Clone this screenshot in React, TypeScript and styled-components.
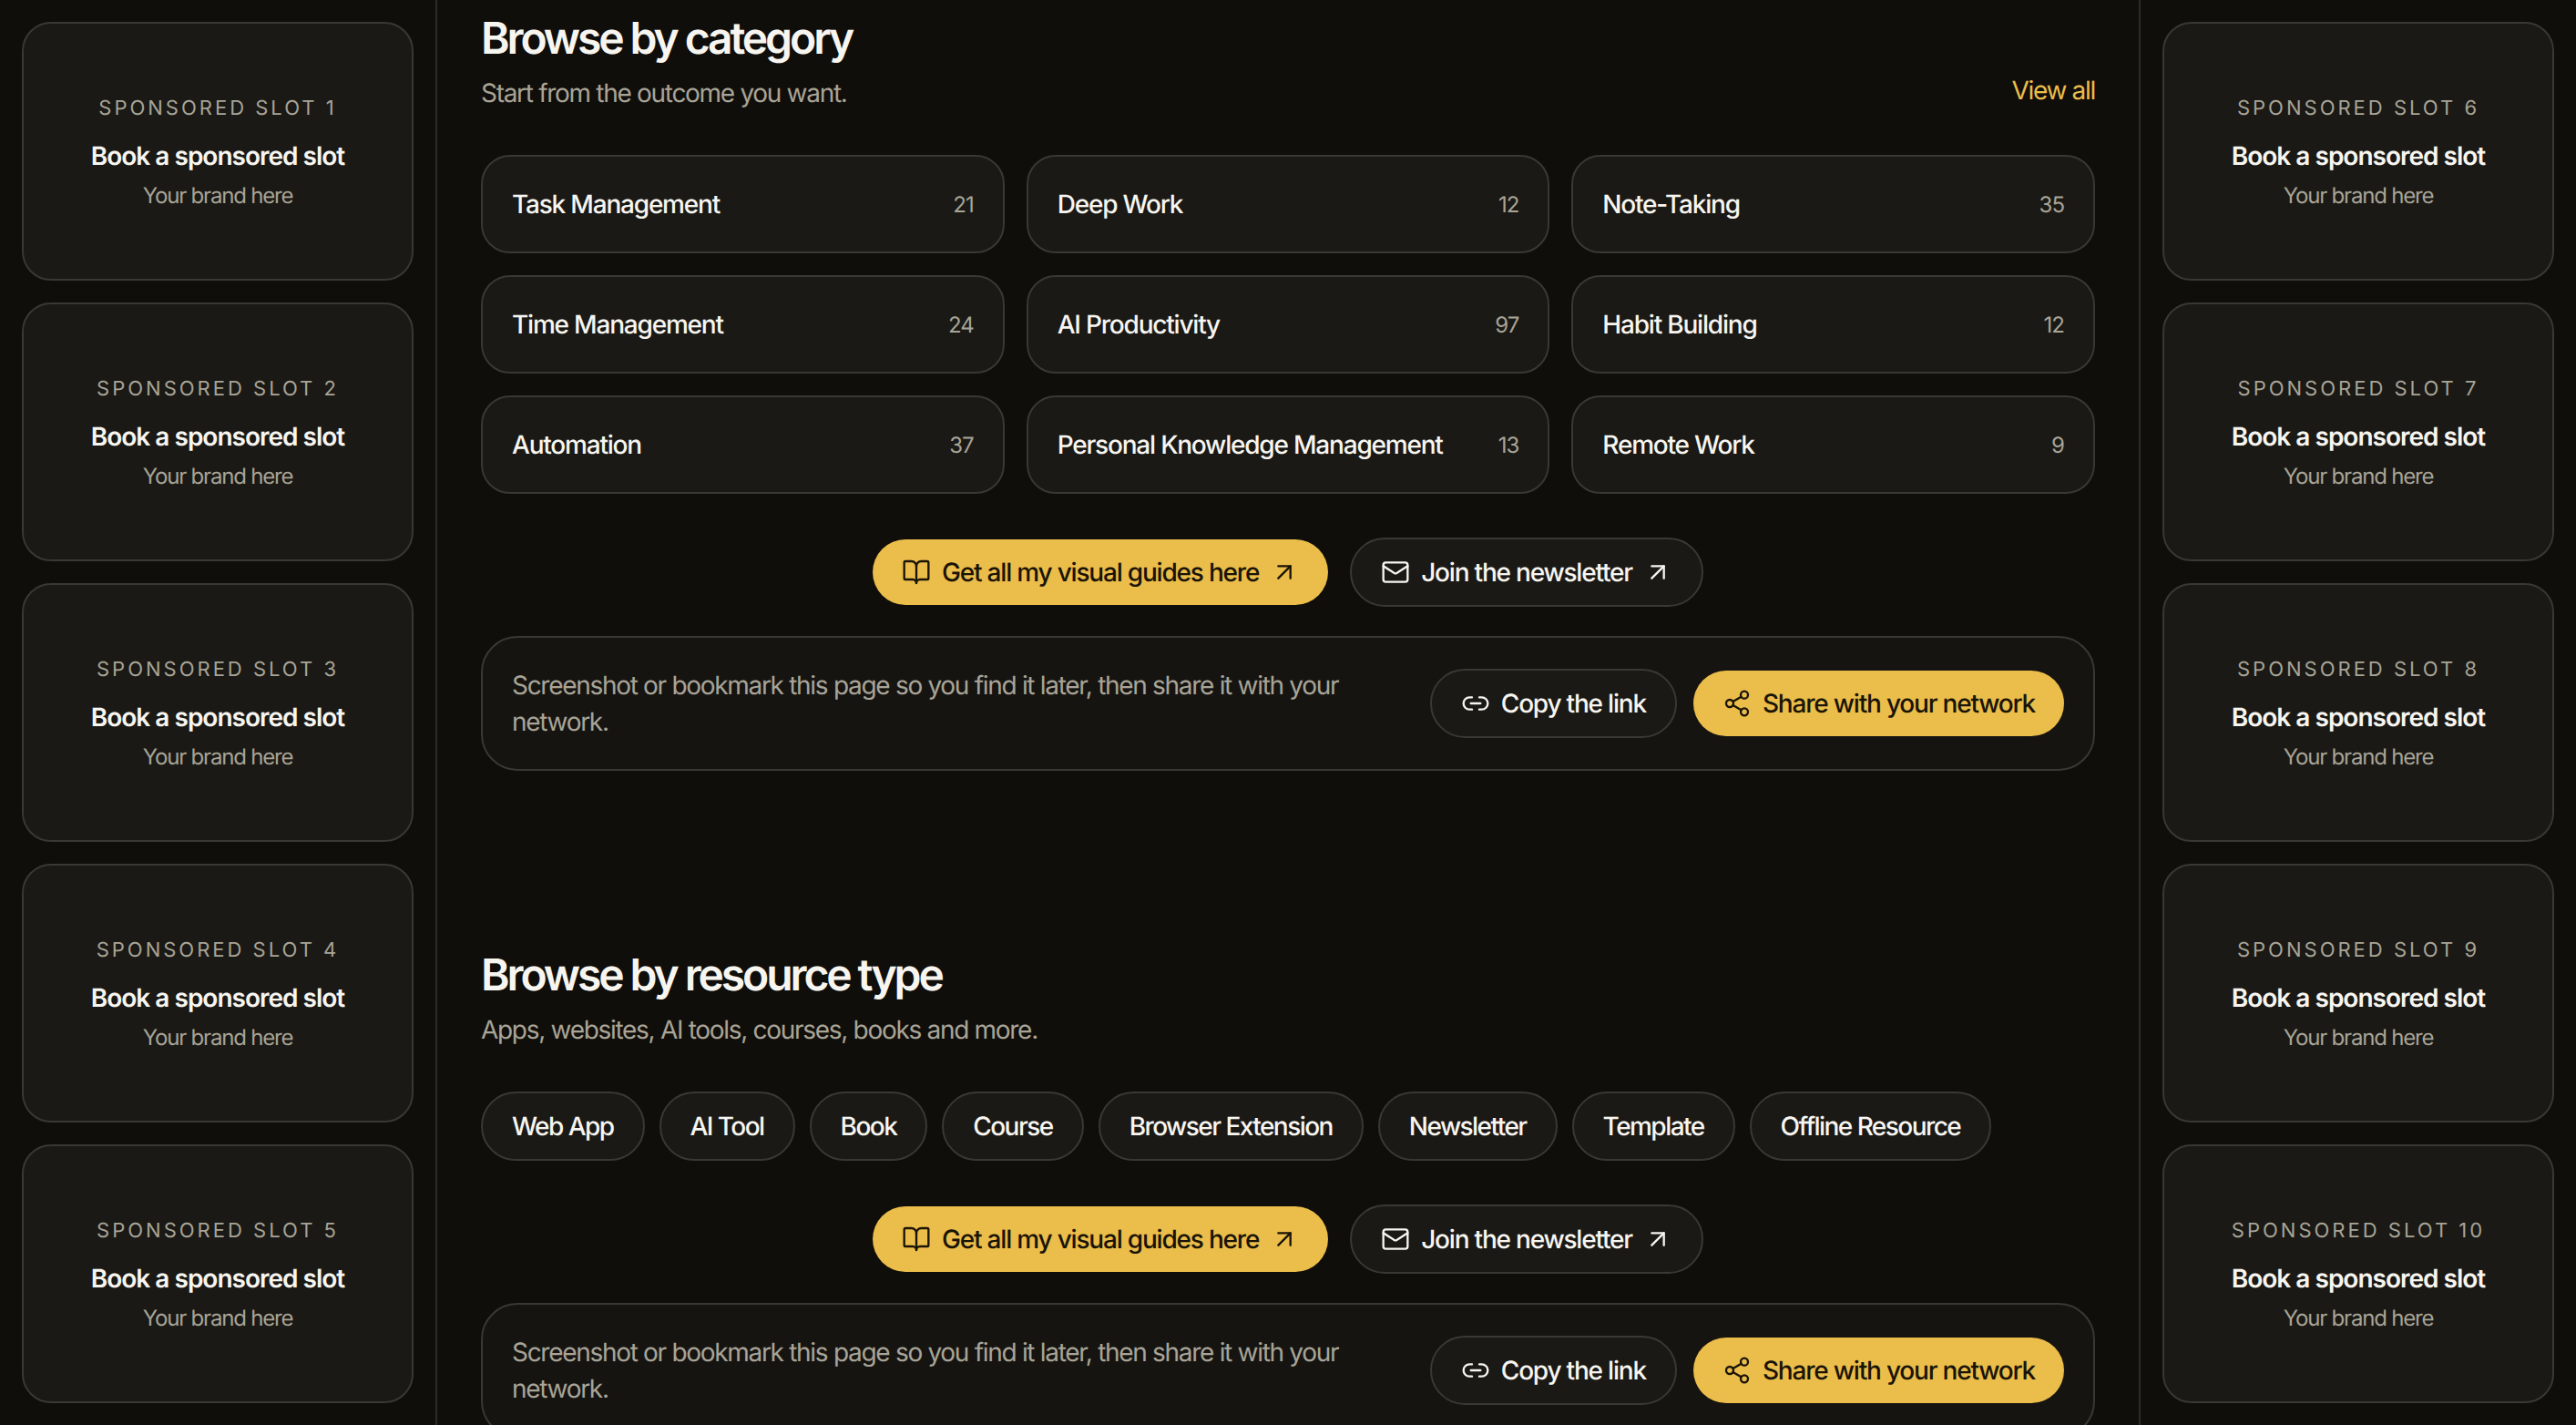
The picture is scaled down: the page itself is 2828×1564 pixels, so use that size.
import React from 'react';
import styled, { createGlobalStyle } from 'styled-components';
import { ArrowUpRight, BookOpen, Link2, Mail, Share2 } from 'lucide-react';

const GlobalStyle = createGlobalStyle`
  html, body {
    margin: 0;
    height: 100%;
    overflow: hidden;
    background: #100e0a;
    font-family: Inter, "Liberation Sans", sans-serif;
    text-rendering: geometricPrecision;
    color: #f7f5f0;
  }
  * { box-sizing: border-box; }
`;

const categories = [
  { name: 'Task Management', count: 21 },
  { name: 'Deep Work', count: 12 },
  { name: 'Note-Taking', count: 35 },
  { name: 'Time Management', count: 24 },
  { name: 'AI Productivity', count: 97 },
  { name: 'Habit Building', count: 12 },
  { name: 'Automation', count: 37 },
  { name: 'Personal Knowledge Management', count: 13 },
  { name: 'Remote Work', count: 9 },
];

const resourceTypes = [
  'Web App',
  'AI Tool',
  'Book',
  'Course',
  'Browser Extension',
  'Newsletter',
  'Template',
  'Offline Resource',
];

const Page = styled.div`
  display: grid;
  grid-template-columns: 480px 1fr 480px;
  height: 1564px;
  overflow: hidden;
`;

const Rail = styled.aside<{ $side: 'left' | 'right' }>`
  display: flex;
  flex-direction: column;
  gap: 24px;
  padding: 24px;
  height: 1564px;
  border-${(p) => p.$side === 'left' ? 'right' : 'left'}: 2px solid #2c2b27;
`;

const SlotCard = styled.div`
  flex: 1;
  display: flex;
  flex-direction: column;
  align-items: center;
  justify-content: center;
  padding-top: 1px;
  background: #1a1915;
  border: 2px solid #393833;
  border-radius: 32px;
`;

const SlotLabel = styled.div`
  font-size: 22px;
  line-height: 32px;
  letter-spacing: 3px;
  color: #a8a497;
`;

const SlotTitle = styled.div`
  margin-top: 16px;
  font-size: 28px;
  line-height: 40px;
  font-weight: 600;
  letter-spacing: -1px;
  color: #f7f5f0;
`;

const SlotNote = styled.div`
  margin-top: 8px;
  font-size: 24px;
  line-height: 32px;
  letter-spacing: -1.2px;
  color: #a8a497;
`;

const Main = styled.main`
  padding: 14px 48px 0;
  height: 1564px;
  overflow: hidden;
`;

const Section = styled.section`
  & + & {
    margin-top: 196px;
  }
`;

const SectionHead = styled.header`
  display: flex;
  align-items: flex-end;
  justify-content: space-between;
  margin-bottom: 48px;
`;

const Title = styled.h2`
  margin: 0 0 12px;
  font-size: 48px;
  line-height: 56px;
  font-weight: 600;
  letter-spacing: -3.1px;
  color: #f7f5f0;
`;

const Subtitle = styled.p`
  margin: 0;
  font-size: 28px;
  line-height: 40px;
  letter-spacing: -1.3px;
  color: #a8a497;
`;

const ViewAll = styled.a`
  padding-bottom: 3px;
  font-size: 28px;
  line-height: 40px;
  letter-spacing: -1.3px;
  color: #ebbd4a;
`;

const CategoryGrid = styled.div`
  display: grid;
  grid-template-columns: repeat(3, 1fr);
  gap: 24px;
`;

const CategoryCard = styled.div`
  display: flex;
  align-items: center;
  justify-content: space-between;
  height: 108px;
  padding: 0 32px;
  background: #1a1915;
  border: 2px solid #393833;
  border-radius: 32px;
`;

const CategoryName = styled.span`
  font-size: 28px;
  font-weight: 500;
  letter-spacing: -1.2px;
  white-space: nowrap;
  color: #f7f5f0;
`;

const CategoryCount = styled.span`
  font-size: 24px;
  letter-spacing: -1px;
  color: #a8a497;
`;

const PillRow = styled.div`
  display: flex;
  flex-wrap: wrap;
  gap: 16px;
`;

const Pill = styled.div`
  padding: 16px 32px;
  font-size: 28px;
  line-height: 40px;
  font-weight: 500;
  letter-spacing: -1.55px;
  background: #1a1915;
  border: 2px solid #393833;
  border-radius: 999px;
  color: #f7f5f0;
`;

const ActionRow = styled.div`
  display: flex;
  align-items: center;
  justify-content: center;
  gap: 24px;
  margin-top: 48px;
`;

const Button = styled.a<{ $gold?: boolean }>`
  display: inline-flex;
  align-items: center;
  gap: 12px;
  padding: 16px 32px;
  font-size: 28px;
  line-height: 40px;
  font-weight: 500;
  letter-spacing: -1.2px;
  white-space: nowrap;
  border-radius: 999px;
  background: ${(p) => (p.$gold ? '#ebbd4a' : '#1a1915')};
  border: ${(p) => (p.$gold ? 'none' : '2px solid #393833')};
  color: ${(p) => (p.$gold ? '#1a1407' : '#f7f5f0')};
  svg {
    flex-shrink: 0;
  }
`;

const SharePanel = styled.div`
  display: flex;
  align-items: center;
  justify-content: space-between;
  gap: 32px;
  margin-top: 32px;
  padding: 32px;
  background: #161411;
  border: 2px solid #393833;
  border-radius: 40px;
`;

const ShareText = styled.p`
  flex: 1;
  margin: 0;
  font-size: 28px;
  line-height: 40px;
  letter-spacing: -1.3px;
  color: #a8a497;
`;

const ShareActions = styled.div`
  display: flex;
  align-items: center;
  gap: 18px;
`;

const SlotRail = ({ side, from }: { side: 'left' | 'right'; from: number }) => (
  <Rail $side={side}>
    {[0, 1, 2, 3, 4].map((i) => (
      <SlotCard key={i}>
        <SlotLabel>SPONSORED SLOT {from + i}</SlotLabel>
        <SlotTitle>Book a sponsored slot</SlotTitle>
        <SlotNote>Your brand here</SlotNote>
      </SlotCard>
    ))}
  </Rail>
);

const Actions = () => (
  <>
    <ActionRow>
      <Button $gold>
        <BookOpen size={32} strokeWidth={1.75} />
        Get all my visual guides here
        <ArrowUpRight size={32} strokeWidth={1.75} />
      </Button>
      <Button>
        <Mail size={32} strokeWidth={1.75} />
        Join the newsletter
        <ArrowUpRight size={32} strokeWidth={1.75} />
      </Button>
    </ActionRow>
    <SharePanel>
      <ShareText>
        Screenshot or bookmark this page so you find it later, then share it with your network.
      </ShareText>
      <ShareActions>
        <Button>
          <Link2 size={32} strokeWidth={1.75} />
          Copy the link
        </Button>
        <Button $gold>
          <Share2 size={32} strokeWidth={1.75} />
          Share with your network
        </Button>
      </ShareActions>
    </SharePanel>
  </>
);

export default function App() {
  return (
    <>
      <GlobalStyle />
      <Page>
        <SlotRail side="left" from={1} />
        <Main>
          <Section>
            <SectionHead>
              <div>
                <Title>Browse by category</Title>
                <Subtitle>Start from the outcome you want.</Subtitle>
              </div>
              <ViewAll>View all</ViewAll>
            </SectionHead>
            <CategoryGrid>
              {categories.map((c) => (
                <CategoryCard key={c.name}>
                  <CategoryName>{c.name}</CategoryName>
                  <CategoryCount>{c.count}</CategoryCount>
                </CategoryCard>
              ))}
            </CategoryGrid>
            <Actions />
          </Section>
          <Section>
            <SectionHead>
              <div>
                <Title>Browse by resource type</Title>
                <Subtitle>Apps, websites, AI tools, courses, books and more.</Subtitle>
              </div>
            </SectionHead>
            <PillRow>
              {resourceTypes.map((t) => (
                <Pill key={t}>{t}</Pill>
              ))}
            </PillRow>
            <Actions />
          </Section>
        </Main>
        <SlotRail side="right" from={6} />
      </Page>
    </>
  );
}
